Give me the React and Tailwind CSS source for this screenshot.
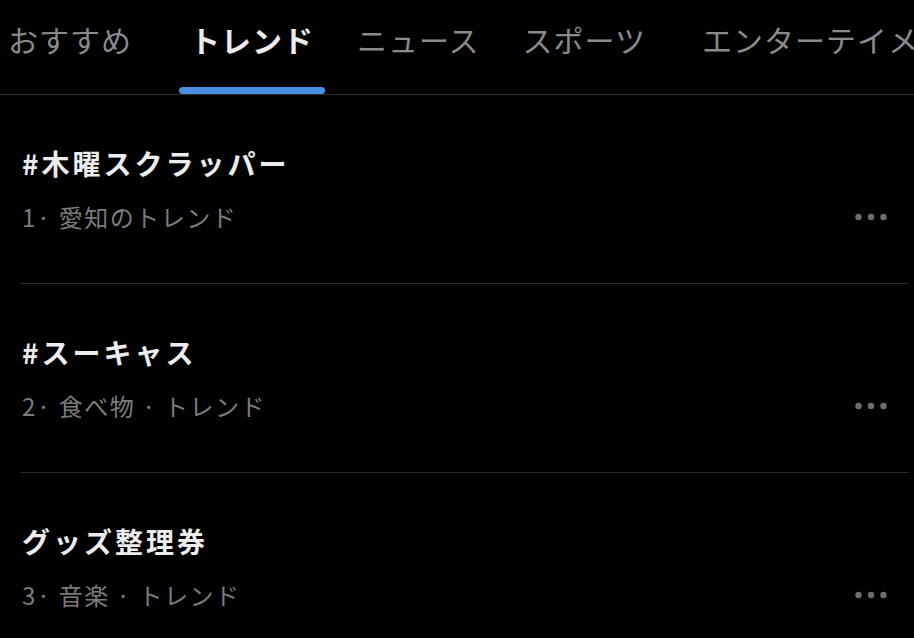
const tabs = [
  { label: "おすすめ", ml: "ml-[-3px]" },
  { label: "トレンド", ml: "ml-[36px]", active: true },
  { label: "ニュース", ml: "ml-[21px]" },
  { label: "スポーツ", ml: "ml-[21px]" },
  { label: "エンターテイメント", ml: "ml-[34px]" },
];

const trends = [
  { title: "#木曜スクラッパー", meta: "1· 愛知のトレンド" },
  { title: "#スーキャス", meta: "2· 食べ物 · トレンド" },
  { title: "グッズ整理券", meta: "3· 音楽 · トレンド" },
];

function Dots() {
  return (
    <svg width="32" height="8" viewBox="0 0 32 8" className="text-[#6e6e70]">
      <circle cx="3.5" cy="4" r="3.2" fill="currentColor" />
      <circle cx="16" cy="4" r="3.2" fill="currentColor" />
      <circle cx="28.5" cy="4" r="3.2" fill="currentColor" />
    </svg>
  );
}

function TabBar() {
  return (
    <div className="flex h-[95px] items-end border-b border-[#2c2c2e] whitespace-nowrap overflow-hidden">
      {tabs.map((tab) => (
        <div key={tab.label} className={`flex flex-col items-center shrink-0 ${tab.ml}`}>
          <span
            className={`px-[11px] text-[30px] leading-[40px] tracking-[1px] ${
              tab.active ? "font-bold text-[#ececec]" : "text-[#8b8b8d]"
            }`}
          >
            {tab.label}
          </span>
          <div
            className={`mt-[28px] h-[7px] w-full rounded-full ${
              tab.active ? "bg-[#4b8fe2]" : "bg-transparent"
            }`}
          />
        </div>
      ))}
    </div>
  );
}

function TrendRow({ title, meta }) {
  return (
    <div className="ml-[21px] mr-[5px] border-b border-[#2c2c2e] pt-[50px] pb-[50px]">
      <div className="pl-[1px] text-[28px] leading-[36px] font-bold tracking-[3px] text-[#ececec]">{title}</div>
      <div className="mt-[20px] flex items-center justify-between pr-[22px]">
        <span className="pl-[1px] text-[24px] leading-[32px] tracking-[1.5px] text-[#7b7b7d]">{meta}</span>
        <Dots />
      </div>
    </div>
  );
}

export default function App() {
  return (
    <div
      className="h-[638px] w-[914px] overflow-hidden bg-black"
      style={{ fontFamily: '"Noto Sans CJK JP", "Noto Sans", sans-serif' }}
    >
      <TabBar />
      {trends.map((t) => (
        <TrendRow key={t.title} {...t} />
      ))}
    </div>
  );
}
